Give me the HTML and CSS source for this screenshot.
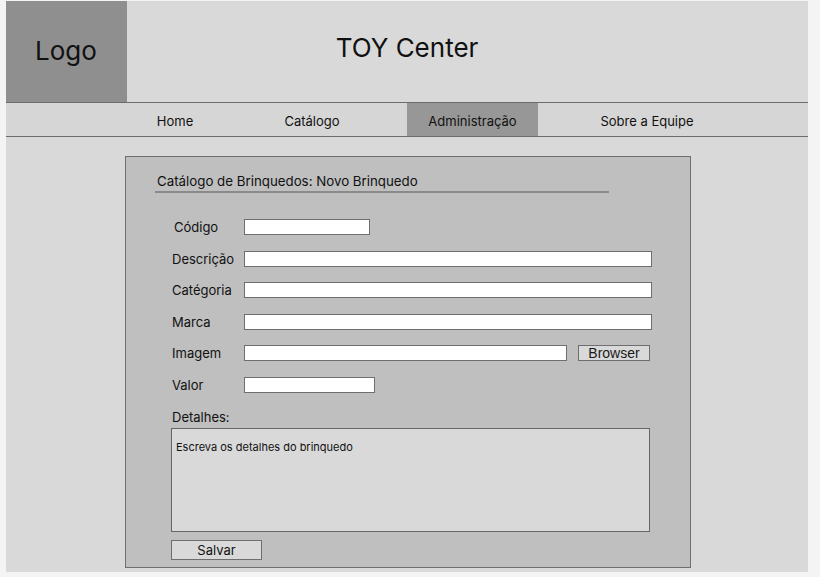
FILE: index.html
```html
<!DOCTYPE html>
<html lang="pt">
<head>
<meta charset="utf-8">
<title>TOY Center</title>
<link rel="stylesheet" href="styles.css">
</head>
<body>
<div class="frame">
  <header class="header">
    <div class="logo">Logo</div>
    <h1 class="title">TOY Center</h1>
  </header>
  <nav class="nav">
    <span class="nav-spacer"></span>
    <a class="nav-item nav-home">Home</a>
    <a class="nav-item nav-cat">Catálogo</a>
    <a class="nav-item nav-admin active">Administração</a>
    <a class="nav-item nav-sobre">Sobre a Equipe</a>
  </nav>
  <main class="panel">
    <h2 class="panel-title">Catálogo de Brinquedos: Novo Brinquedo</h2>
    <form class="form">
      <div class="row"><label class="lbl lbl-indent">Código</label><span class="input w-codigo"></span></div>
      <div class="row"><label class="lbl">Descrição</label><span class="input w-full"></span></div>
      <div class="row"><label class="lbl">Catégoria</label><span class="input w-full"></span></div>
      <div class="row"><label class="lbl">Marca</label><span class="input w-full"></span></div>
      <div class="row"><label class="lbl">Imagem</label><span class="input w-imagem"></span><span class="btn-browse">Browser</span></div>
      <div class="row"><label class="lbl">Valor</label><span class="input w-valor"></span></div>
      <div class="details-label">Detalhes:</div>
      <div class="textarea">Escreva os detalhes do brinquedo</div>
      <div class="btn-save">Salvar</div>
    </form>
  </main>
</div>
</body>
</html>
```
FILE: styles.css
```css
* { box-sizing: border-box; }
html, body { margin: 0; padding: 0; }
body {
  background: #f4f4f4;
  font-family: "Inter", "Noto Sans", sans-serif;
  color: #111;
  width: 820px;
  height: 577px;
  overflow: hidden;
}
.frame {
  margin: 1px 0 0 6px;
  width: 802px;
  height: 571px;
  background: #d9d9d9;
  display: flex;
  flex-direction: column;
}
.header {
  display: flex;
  height: 102px;
  border-bottom: 1px solid #6c6c6c;
}
.logo {
  width: 121px;
  background: #8f8f8f;
  display: flex;
  align-items: center;
  justify-content: center;
  font-size: 26px;
  padding-bottom: 2px;
  padding-right: 1px;
}
.title {
  flex: 1;
  margin: 0;
  font-weight: 400;
  font-size: 26px;
  display: flex;
  align-items: center;
  justify-content: center;
  padding-right: 121px;
  padding-bottom: 9px;
}
.nav {
  display: flex;
  height: 34px;
  background: #d6d6d6;
  border-bottom: 1px solid #6c6c6c;
  font-size: 13px;
}
.nav-spacer { width: 121px; }
.nav-item {
  display: flex;
  align-items: center;
  justify-content: center;
  color: #111;
  padding-top: 2px;
}
.nav-home { width: 96px; }
.nav-cat { width: 178px; margin-right: 6px; }
.nav-admin { width: 131px; }
.nav-sobre { width: 216px; padding-left: 2px; }
.nav-item.active { background: #979797; }
.panel {
  margin: 19px 0 0 119px;
  width: 566px;
  height: 412px;
  background: #bfbfbf;
  border: 1px solid #6f6f6f;
  padding: 16px 0 0 29px;
}
.panel-title {
  margin: 0;
  width: 454px;
  font-size: 13.3px;
  font-weight: 400;
  line-height: 16px;
  padding: 0 0 2px 2px;
  border-bottom: 2px solid #8a8a8a;
}
.form {
  margin: 26px 0 0 17px;
  display: flex;
  flex-direction: column;
}
.row {
  display: flex;
  align-items: center;
  height: 16px;
  margin-bottom: 15.6px;
}
.lbl {
  width: 72px;
  font-size: 13px;
  line-height: 16px;
}
.lbl-indent { padding-left: 2px; }
.input {
  height: 16px;
  background: #fff;
  border: 1px solid #6e6e6e;
}
.w-codigo { width: 126px; }
.w-full { width: 408px; }
.w-imagem { width: 323px; }
.w-valor { width: 131px; }
.btn-browse {
  margin-left: 11px;
  width: 72px;
  height: 16px;
  background: #d9d9d9;
  border: 1px solid #6e6e6e;
  font-family: "Liberation Sans", Arial, sans-serif;
  font-size: 14px;
  line-height: 14px;
  text-align: center;
  color: #1a1a1a;
}
.details-label {
  font-size: 13px;
  line-height: 16px;
  margin-top: 0;
}
.textarea {
  margin: 3px 0 0 -1px;
  width: 479px;
  height: 104px;
  background: #d9d9d9;
  border: 1px solid #666;
  font-size: 11px;
  padding: 11px 0 0 4px;
  line-height: 14px;
}
.btn-save {
  margin: 8px 0 0 -1px;
  width: 91px;
  height: 20px;
  background: #d9d9d9;
  border: 1px solid #6e6e6e;
  font-size: 13px;
  line-height: 18px;
  text-align: center;
}
```
